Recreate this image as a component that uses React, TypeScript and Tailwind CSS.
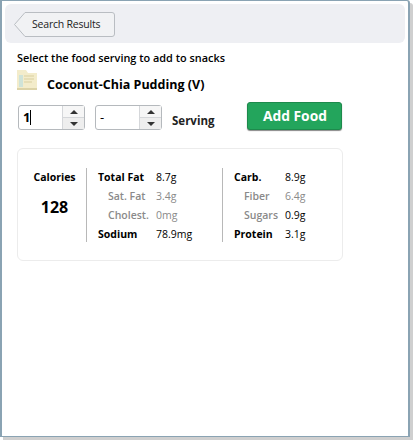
import { ReactNode } from "react";

function Spinner({ value, width, bold }: { value: ReactNode; width: string; bold?: boolean }) {
  return (
    <div className={`flex h-[25px] rounded-[3px] border border-[#b5b9bd] bg-white ${width}`}>
      <div className={`flex flex-1 items-center pl-[4px] text-[13px] text-black ${bold ? "font-bold" : ""}`}>
        {value}
      </div>
      <div className="flex w-[22px] flex-col border-l border-[#d5d7da]">
        <div className="flex flex-1 items-center justify-center border-b border-[#d5d7da] bg-[#f6f6f6]">
          <span className="h-0 w-0 border-x-[4px] border-b-[4px] border-x-transparent border-b-[#333]" />
        </div>
        <div className="flex flex-1 items-center justify-center bg-[#eeeeee]">
          <span className="h-0 w-0 border-x-[4px] border-t-[4px] border-x-transparent border-t-[#333]" />
        </div>
      </div>
    </div>
  );
}

function NutrientRow({
  label,
  value,
  sub,
  subValue,
  labelWidth,
}: {
  label: string;
  value: string;
  sub?: boolean;
  subValue?: boolean;
  labelWidth: string;
}) {
  return (
    <div className="flex h-[19px] shrink-0 items-center">
      <span
        className={`whitespace-nowrap text-[10.5px] ${labelWidth} ${sub ? "pl-[10px] font-semibold text-[#8a8a8a]" : "font-bold text-black"}`}
      >
        {label}
      </span>
      <span className={`whitespace-nowrap text-[10.5px] ${subValue ? "text-[#8a8a8a]" : "text-black"}`}>{value}</span>
    </div>
  );
}

export default function App() {
  return (
    <div className="h-[440px] w-[413px] bg-white font-['Open_Sans','Noto_Sans',sans-serif]">
      <div className="h-[437px] w-[410px] rounded-tr-[3px] border-x-2 border-y border-x-[#8aa3b3] border-y-[#8aa3b3] bg-white px-[3px] pt-[3px] shadow-[3px_3px_0_#cfcfcf]">
        <div className="flex h-[39px] items-center rounded-[6px] bg-[#eeeff3] pt-px pl-[9px]">
          <div className="relative flex h-[25px] w-[101px] items-center">
            <svg className="absolute inset-0" width="101" height="25" viewBox="0 0 101 25" fill="none">
              <path
                d="M0.5 12.5 L11 0.5 H98 Q100.5 0.5 100.5 3 V22 Q100.5 24.5 98 24.5 H11 Z"
                fill="#f1f2f4"
                stroke="#b9bdc2"
              />
            </svg>
            <span className="relative pt-px pl-[18px] text-[10.5px] tracking-[-0.2px] whitespace-nowrap text-[#222]">
              Search Results
            </span>
          </div>
        </div>

        <div className="pl-[12px]">
          <p className="mt-[7px] text-[10.9px] leading-[15px] font-semibold whitespace-nowrap text-black">
            Select the food serving to add to snacks
          </p>

          <div className="mt-[8px] flex h-[24px] items-center">
            <svg width="20" height="20" viewBox="0 0 20 20" className="-mt-[3px] shrink-0 self-start">
              <path d="M0 0 H9 L11 3 H20 V18 H0 Z" fill="#f3eccb" />
              <path d="M0 18 H20 V20 H0 Z" fill="#dcd3a8" />
              <path d="M2 5 H6 V17 H2 Z" fill="#cfe3d8" />
              <path d="M7 6 H17 M7 9 H17 M7 12 H15" stroke="#d9cfa0" />
            </svg>
            <h1 className="ml-[10px] text-[12.5px] font-bold whitespace-nowrap text-black">Coconut-Chia Pudding (V)</h1>
          </div>

          <div className="mt-[5px] ml-px flex items-center">
            <Spinner
              width="w-[67px]"
              bold
              value={
                <>
                  1<span className="h-[15px] w-px bg-black" />
                </>
              }
            />
            <div className="ml-[10px]">
              <Spinner width="w-[67px]" value="-" />
            </div>
            <span className="mt-[7px] ml-[10px] text-[11.5px] font-bold text-[#222]">Serving</span>
            <button className="mb-[3px] ml-[33px] flex h-[28px] w-[95px] items-center justify-center rounded-[3px] border border-[#1d8a4c] bg-[#23a55c] text-[13.8px] font-bold text-white shadow-[0_1px_1px_#888]">
              Add Food
            </button>
          </div>

          <div className="mt-[15px] flex h-[113px] w-[326px] items-center rounded-[6px] border border-[#ececec] pl-[16px]">
            <div className="flex h-[74px] w-[41px] flex-col items-center">
              <span className="mt-px flex h-[19px] items-center text-[10.5px] font-bold whitespace-nowrap text-black">
                Calories
              </span>
              <span className="mt-[7px] text-[16px] leading-[24px] font-bold text-black">128</span>
            </div>
            <div className="ml-[11px] flex h-[74px] w-[136px] flex-col border-l border-[#b8b8b8] pt-px pl-[11px]">
              <NutrientRow labelWidth="w-[58px]" label="Total Fat" value="8.7g" />
              <NutrientRow labelWidth="w-[58px]" label="Sat. Fat" value="3.4g" sub subValue />
              <NutrientRow labelWidth="w-[58px]" label="Cholest." value="0mg" sub subValue />
              <NutrientRow labelWidth="w-[58px]" label="Sodium" value="78.9mg" />
            </div>
            <div className="flex h-[74px] flex-col border-l border-[#b8b8b8] pt-px pl-[11px]">
              <NutrientRow labelWidth="w-[51px]" label="Carb." value="8.9g" />
              <NutrientRow labelWidth="w-[51px]" label="Fiber" value="6.4g" sub subValue />
              <NutrientRow labelWidth="w-[51px]" label="Sugars" value="0.9g" sub />
              <NutrientRow labelWidth="w-[51px]" label="Protein" value="3.1g" />
            </div>
          </div>
        </div>
      </div>
    </div>
  );
}
